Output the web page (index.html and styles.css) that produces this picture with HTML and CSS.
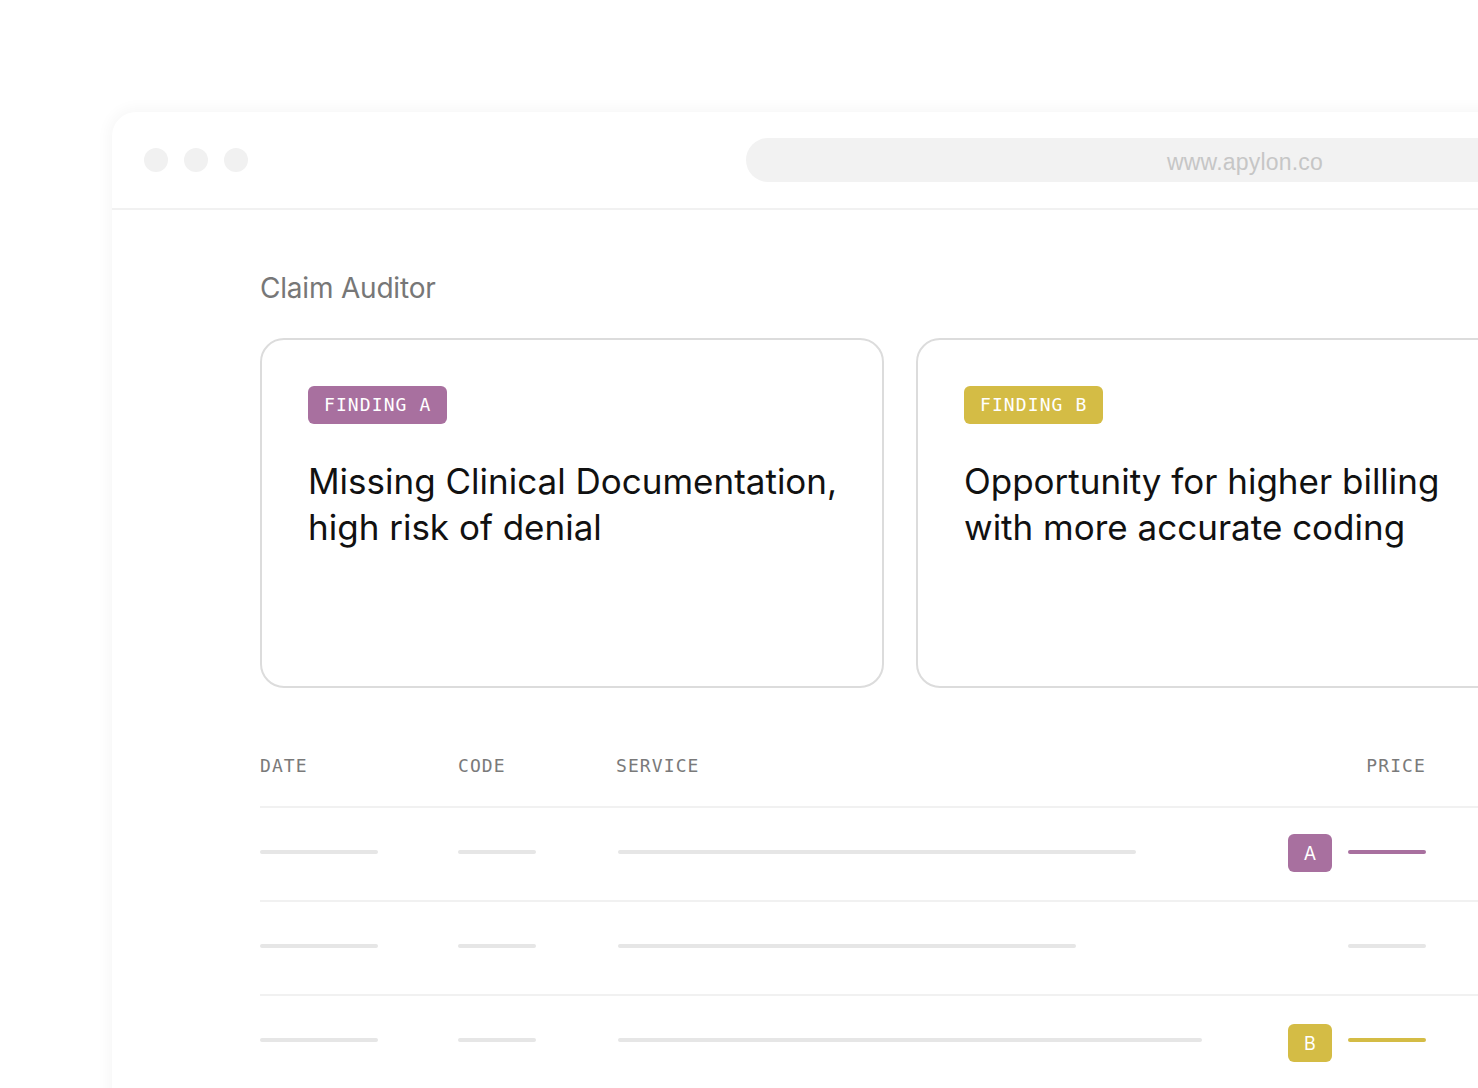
FILE: index.html
```html
<!DOCTYPE html>
<html lang="en">
<head>
<meta charset="utf-8">
<title>Claim Auditor</title>
<link rel="stylesheet" href="styles.css">
</head>
<body>
<div class="stage">
  <div class="window">
    <div class="chrome">
      <div class="dots"><span class="dot"></span><span class="dot"></span><span class="dot"></span></div>
      <div class="url">www.apylon.co</div>
    </div>
    <div class="content">
      <h1 class="title">Claim Auditor</h1>
      <div class="cards">
        <div class="card">
          <span class="tag tag-a">FINDING A</span>
          <p class="finding">Missing Clinical Documentation, high risk of denial</p>
        </div>
        <div class="card">
          <span class="tag tag-b">FINDING B</span>
          <p class="finding">Opportunity for higher billing with more accurate coding</p>
        </div>
      </div>
      <div class="table">
        <div class="row head">
          <div class="c-date">DATE</div>
          <div class="c-code">CODE</div>
          <div class="c-service">SERVICE</div>
          <div class="c-price">PRICE</div>
        </div>
        <div class="row">
          <div class="c-date"><span class="bar" style="width:118px"></span></div>
          <div class="c-code"><span class="bar" style="width:78px"></span></div>
          <div class="c-service"><span class="bar svc" style="width:518px"></span></div>
          <div class="c-price"><span class="mark mark-a">A</span><span class="bar bar-a" style="width:78px"></span></div>
        </div>
        <div class="row">
          <div class="c-date"><span class="bar" style="width:118px"></span></div>
          <div class="c-code"><span class="bar" style="width:78px"></span></div>
          <div class="c-service"><span class="bar svc" style="width:458px"></span></div>
          <div class="c-price"><span class="bar" style="width:78px"></span></div>
        </div>
        <div class="row">
          <div class="c-date"><span class="bar" style="width:118px"></span></div>
          <div class="c-code"><span class="bar" style="width:78px"></span></div>
          <div class="c-service"><span class="bar svc" style="width:584px"></span></div>
          <div class="c-price"><span class="mark mark-b">B</span><span class="bar bar-b" style="width:78px"></span></div>
        </div>
      </div>
    </div>
  </div>
</div>
</body>
</html>
```
FILE: styles.css
```css
html, body {
  margin: 0;
  padding: 0;
  background: #ffffff;
  overflow: hidden;
  height: 1088px;
}
.stage {
  padding: 112px 0 0 112px;
}
.window {
  width: 1760px;
  height: 1200px;
  background: #ffffff;
  border-radius: 24px 0 0 0;
  box-shadow: 0 0 14px 4px rgba(0, 0, 0, 0.035);
}
.chrome {
  height: 96px;
  border-bottom: 2px solid #f1f1f1;
  display: flex;
  align-items: center;
  padding-left: 32px;
}
.dots {
  display: flex;
  gap: 16px;
}
.dot {
  width: 24px;
  height: 24px;
  border-radius: 50%;
  background: #f1f1f1;
}
.url {
  flex-shrink: 0;
  margin-left: 498px;
  width: 998px;
  height: 44px;
  border-radius: 22px;
  background: #f2f2f2;
  color: #c6c6c6;
  font-family: "Liberation Sans", Arial, sans-serif;
  font-size: 23px;
  letter-spacing: 0.2px;
  display: flex;
  align-items: center;
  justify-content: center;
  padding-top: 4px;
  box-sizing: border-box;
}
.content {
  padding: 60px 0 0 148px;
  font-family: Inter, "Noto Sans", sans-serif;
}
.title {
  margin: 0 0 32px 0;
  font-size: 28px;
  line-height: 36px;
  font-weight: 400;
  color: #777777;
  letter-spacing: -0.2px;
}
.cards {
  display: flex;
  gap: 32px;
}
.card {
  width: 624px;
  height: 350px;
  box-sizing: border-box;
  border: 2px solid #dcdcdc;
  border-radius: 24px;
  padding: 46px 20px 46px 46px;
}
.tag {
  display: inline-block;
  height: 38px;
  line-height: 38px;
  padding: 0 16px;
  border-radius: 6px;
  color: #ffffff;
  font-family: "DejaVu Sans Mono", monospace;
  font-size: 18px;
  letter-spacing: 1.1px;
}
.tag-a { background: #a8709f; }
.tag-b { background: #d4bc45; }
.finding {
  margin: 34px 0 0 0;
  font-size: 35px;
  line-height: 46px;
  color: #111111;
  letter-spacing: 0;
}
.table {
  margin-top: 67px;
}
.row {
  display: flex;
  align-items: center;
  height: 90px;
  padding-bottom: 2px;
  border-bottom: 2px solid #f1f1f1;
}
.row.head {
  height: 51px;
  padding-bottom: 0;
  align-items: flex-start;
  font-family: "DejaVu Sans Mono", monospace;
  font-size: 18px;
  letter-spacing: 1.1px;
  color: #7a7a7a;
}
.c-date { width: 198px; }
.c-code { width: 158px; }
.c-service { width: 648px; }
.c-service .bar { margin-left: 2px; }
.c-price {
  width: 162px;
  display: flex;
  align-items: center;
  justify-content: flex-end;
  gap: 16px;
}
.bar {
  display: block;
  height: 4px;
  border-radius: 2px;
  background: #e6e6e6;
  margin-bottom: 2px;
}
.bar-a { background: #a8709f; }
.bar-b { background: #d4bc45; }
.mark {
  width: 44px;
  height: 38px;
  border-radius: 6px;
  color: #ffffff;
  font-family: Inter, "Noto Sans", sans-serif;
  font-size: 18px;
  display: flex;
  align-items: center;
  justify-content: center;
}
.mark-a { background: #a8709f; }
.mark-b { background: #d4bc45; margin-top: 4px; }
```
